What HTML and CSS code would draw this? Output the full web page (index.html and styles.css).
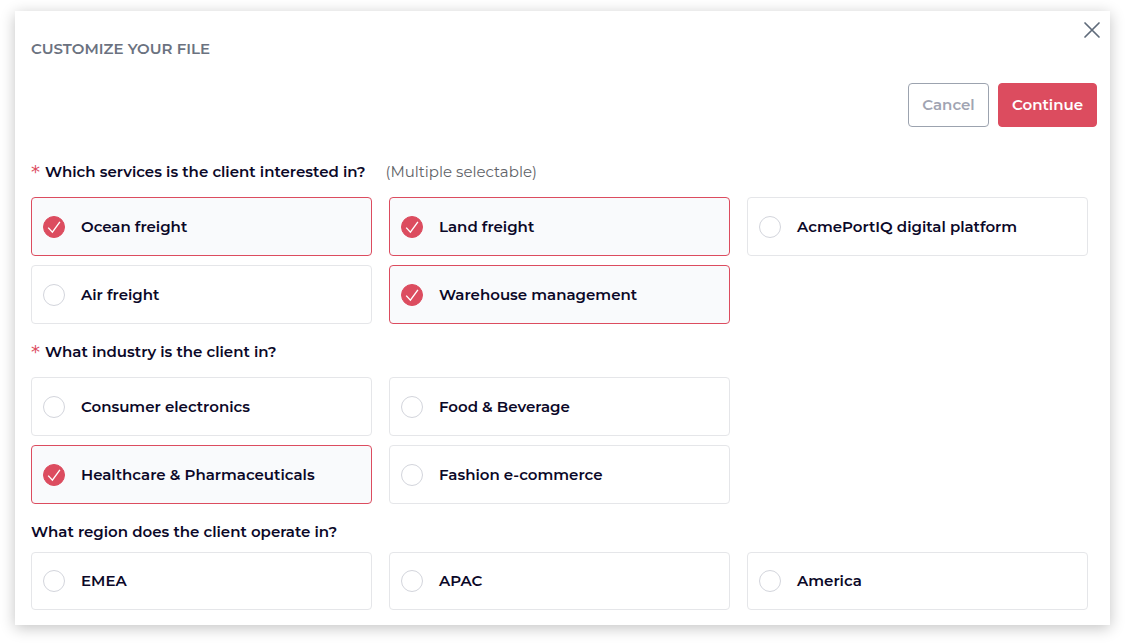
FILE: index.html
```html
<!DOCTYPE html>
<html lang="en">
<head>
<meta charset="utf-8">
<meta name="viewport" content="width=device-width, initial-scale=1">
<title>Customize your file</title>
<link rel="stylesheet" href="styles.css">
</head>
<body>
<svg class="sprite" aria-hidden="true">
  <symbol id="tick" viewBox="0 0 22 22"><path d="M5.2 11.6 9.4 16.2 16.9 5.8" fill="none" stroke="currentColor" stroke-width="1.4"/></symbol>
</svg>
<main class="dialog">
  <header class="header">
    <h1 class="title">CUSTOMIZE YOUR FILE</h1>
    <button class="close" type="button" aria-label="Close">
      <svg viewBox="0 0 24 24" width="24" height="24" aria-hidden="true"><path d="M5 5 19 19M19 5 5 19" fill="none" stroke="currentColor" stroke-width="1.7" stroke-linecap="round"/></svg>
    </button>
  </header>
  <form class="form">
    <div class="actions">
      <button class="button button-outline" type="button">Cancel</button>
      <button class="button button-primary" type="submit">Continue</button>
    </div>
    <div class="questions">
      <fieldset class="question">
        <legend class="legend"><span class="required">*</span><span>Which services is the client interested in?</span><span class="hint">(Multiple selectable)</span></legend>
        <div class="options">
          <label class="option"><span class="check"><input type="checkbox" checked><svg><use href="#tick"/></svg></span>Ocean freight</label>
          <label class="option"><span class="check"><input type="checkbox" checked><svg><use href="#tick"/></svg></span>Land freight</label>
          <label class="option"><span class="check"><input type="checkbox"><svg><use href="#tick"/></svg></span>AcmePortIQ digital platform</label>
          <label class="option"><span class="check"><input type="checkbox"><svg><use href="#tick"/></svg></span>Air freight</label>
          <label class="option"><span class="check"><input type="checkbox" checked><svg><use href="#tick"/></svg></span>Warehouse management</label>
        </div>
      </fieldset>
      <fieldset class="question">
        <legend class="legend"><span class="required">*</span><span>What industry is the client in?</span></legend>
        <div class="options">
          <label class="option"><span class="check"><input type="radio" name="industry"><svg><use href="#tick"/></svg></span>Consumer electronics</label>
          <label class="option"><span class="check"><input type="radio" name="industry"><svg><use href="#tick"/></svg></span>Food &amp; Beverage</label>
          <label class="option row-start"><span class="check"><input type="radio" name="industry" checked><svg><use href="#tick"/></svg></span>Healthcare &amp; Pharmaceuticals</label>
          <label class="option"><span class="check"><input type="radio" name="industry"><svg><use href="#tick"/></svg></span>Fashion e-commerce</label>
        </div>
      </fieldset>
      <fieldset class="question question-compact">
        <legend class="legend"><span>What region does the client operate in?</span></legend>
        <div class="options">
          <label class="option"><span class="check"><input type="radio" name="region"><svg><use href="#tick"/></svg></span>EMEA</label>
          <label class="option"><span class="check"><input type="radio" name="region"><svg><use href="#tick"/></svg></span>APAC</label>
          <label class="option"><span class="check"><input type="radio" name="region"><svg><use href="#tick"/></svg></span>America</label>
        </div>
      </fieldset>
    </div>
  </form>
</main>
</body>
</html>
```

FILE: styles.css
```css
* { box-sizing: border-box; }

body {
  margin: 0;
  padding: 11px 15px 19px;
  background: #fff;
  color: #0b0828;
  font-family: Montserrat, Inter, "Open Sans", sans-serif;
  font-size: 15px;
  font-weight: 600;
  line-height: 24px;
}

.sprite { display: none; }

.dialog {
  padding-bottom: 15px;
  background: #fff;
  box-shadow: 0 3px 14px rgba(0, 0, 0, 0.24);
}

.header {
  display: flex;
  justify-content: space-between;
  align-items: flex-start;
  padding: 7px 6px 0 16px;
}

.title {
  margin: 0;
  padding-top: 19px;
  color: #6b7280;
  font-size: 15px;
  font-weight: 600;
}

.close {
  display: flex;
  padding: 0;
  border: 0;
  background: none;
  color: #5f6b7a;
}

.actions {
  display: flex;
  justify-content: flex-end;
  gap: 9px;
  padding: 22px 13px 0;
}

.button {
  height: 44px;
  padding: 0 12px;
  border: 1px solid #9ca3af;
  border-radius: 4px;
  font: inherit;
}

.button-outline {
  min-width: 81px;
  background: #fff;
  color: #a1a4b2;
}

.button-primary {
  min-width: 99px;
  border-color: #dc4c5f;
  background: #dc4c5f;
  color: #fff;
}

.questions {
  display: grid;
  gap: 16px;
  padding: 33px 22px 0 16px;
}

.question {
  min-width: 0;
  margin: 0;
  padding: 0;
  border: 0;
}

.legend {
  display: flex;
  padding: 0;
  margin-bottom: 13px;
}

.required {
  width: 14px;
  color: #dc4c5f;
  font-family: "DejaVu Sans", sans-serif;
  font-size: 18px;
  font-weight: 400;
}

.hint {
  margin-left: 20px;
  color: #5f6368;
  font-weight: 400;
}

.options {
  display: grid;
  grid-template-columns: repeat(3, 1fr);
  gap: 9px 17px;
}

.option {
  display: flex;
  align-items: center;
  gap: 16px;
  min-height: 59px;
  padding: 0 11px;
  border: 1px solid #e5e6e9;
  border-radius: 4px;
}

.option:has(input:checked) {
  border-color: #dc4c5f;
  background: #f9fafc;
}

.row-start { grid-column: 1; }

.question-compact .legend { margin-bottom: 8px; }
.question-compact .option { min-height: 58px; }

.check {
  display: grid;
  flex: none;
}

.check input {
  grid-area: 1 / 1;
  appearance: none;
  width: 22px;
  height: 22px;
  margin: 0;
  border: 1px solid #d3d5dc;
  border-radius: 50%;
  background: #fff;
}

.check input:checked {
  border-color: #dc4c5f;
  background: #dc4c5f;
}

.check svg {
  grid-area: 1 / 1;
  width: 22px;
  height: 22px;
  color: #fff;
  pointer-events: none;
}

.check input:not(:checked) + svg { visibility: hidden; }
```
